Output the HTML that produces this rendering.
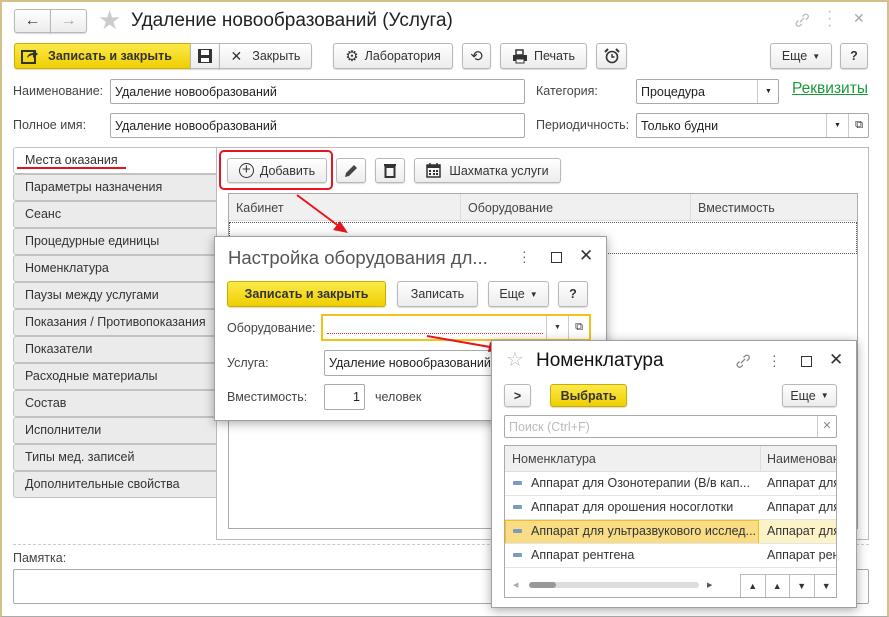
<!DOCTYPE html>
<html><head><meta charset="utf-8"><style>
*{box-sizing:border-box;margin:0;padding:0}
body{width:889px;height:617px;overflow:hidden;background:#fff;font-family:"Liberation Sans","DejaVu Sans",sans-serif;font-size:13px;color:#333;position:relative}
.a{position:absolute}
.frame{left:0;top:0;width:889px;height:617px;border:2px solid #d2c189;border-bottom-color:#aaa;border-bottom-width:1px}
.btn{position:absolute;border:1px solid #b8b8b8;border-radius:3px;background:linear-gradient(#fff,#ececec);box-shadow:0 1px 1px rgba(0,0,0,.15);display:flex;align-items:center;justify-content:center;color:#333;font-size:12.5px;white-space:nowrap}
.y{background:linear-gradient(#fbe94a,#f0cf00);border-color:#c9ad00;color:#333;font-weight:bold}
.inp{position:absolute;border:1px solid #a9a9a9;border-radius:2px;background:#fff;padding-left:4px;display:flex;align-items:center;font-size:12.5px;color:#222;white-space:nowrap;overflow:hidden}
.lbl{position:absolute;color:#444;font-size:12.5px;white-space:nowrap}
.tab{position:absolute;left:13px;width:204px;height:27px;border:1px solid #c2c2c2;border-radius:3px 0 0 3px;background:#ebebeb;padding-left:11px;line-height:25px;font-size:12.5px;color:#333}
.dlg{position:absolute;background:#fff;border:1px solid #a0a0a0;box-shadow:0 2px 10px rgba(0,0,0,.35)}
.row{position:absolute;left:0;right:0;height:24px;border-bottom:1px solid #e4e4e4;line-height:23px;font-size:12.5px;color:#333;white-space:nowrap;overflow:hidden}
.mk{display:inline-block;width:9px;height:4px;background:#7a9cc4;border-radius:1px;margin:0 9px 2px 8px;vertical-align:middle}
</style></head><body>
<div class="a frame"></div>
<svg width="0" height="0" style="position:absolute"><defs><g id="lnk"><path d="M6 10 L10 6 M4.5 8.5 L2.8 10.2 a2.4 2.4 0 0 0 3.4 3.4 L7.9 11.9 M8.5 4.5 L10.2 2.8 a2.4 2.4 0 0 1 3.4 3.4 L11.9 7.9" fill="none" stroke-width="1.3"/></g></defs></svg>
<!-- nav -->
<div class="btn" style="left:14px;top:9px;width:37px;height:24px;border-radius:3px 0 0 3px;font-size:16px">&#8592;</div>
<div class="btn" style="left:50px;top:9px;width:37px;height:24px;border-radius:0 3px 3px 0;font-size:16px;color:#aaa">&#8594;</div>
<div class="a" style="left:98px;top:5px;font-size:26px;color:#ccc">&#9733;</div>
<div class="a" style="left:131px;top:10px;font-size:19px;color:#222">Удаление новообразований (Услуга)</div>
<svg class="a" style="left:794px;top:12px" width="16" height="16"><use href="#lnk" stroke="#bbb"/></svg>
<div class="a" style="left:827px;top:8px;font-size:16px;color:#bbb;line-height:7px">·<br>·<br>·</div>
<div class="a" style="left:853px;top:10px;font-size:14px;color:#aaa">&#10005;</div>
<!-- toolbar -->
<div class="btn y" style="left:14px;top:43px;width:177px;height:26px;border-radius:3px 0 0 3px;justify-content:flex-start;padding-left:6px"><svg width="18" height="16" viewBox="0 0 18 16"><rect x="1" y="3" width="13" height="12" fill="none" stroke="#333" stroke-width="2"/><path d="M6 10 Q7 5 12 5 V2 L17 6 L12 10 V7 Q9 7 6 10Z" fill="#333"/></svg><span style="margin-left:9px">Записать и закрыть</span></div>
<div class="btn" style="left:190px;top:43px;width:30px;height:26px;border-radius:0"><svg width="16" height="16"><rect x="1" y="1" width="14" height="14" fill="#333"/><rect x="4" y="2" width="8" height="5" fill="#fff"/><rect x="4" y="10" width="8" height="4" fill="#fff"/></svg></div>
<div class="btn" style="left:219px;top:43px;width:93px;height:26px;border-radius:0 3px 3px 0"><b style="font-size:14px;margin-right:10px">&#10005;</b>Закрыть</div>
<div class="btn" style="left:333px;top:43px;width:120px;height:26px"><span style="font-size:15px;margin-right:6px">&#9881;</span>Лаборатория</div>
<div class="btn" style="left:462px;top:43px;width:29px;height:26px;font-size:15px">&#10226;</div>
<div class="btn" style="left:500px;top:43px;width:87px;height:26px"><svg width="16" height="15" style="margin-right:6px"><rect x="4" y="1" width="7" height="5" fill="none" stroke="#333" stroke-width="1.5"/><rect x="1" y="6" width="14" height="6" fill="#333"/><rect x="4" y="10" width="8" height="4" fill="#fff" stroke="#333"/></svg>Печать</div>
<div class="btn" style="left:596px;top:43px;width:31px;height:26px"><svg width="16" height="16"><circle cx="8" cy="9" r="5.5" fill="none" stroke="#333" stroke-width="1.6"/><path d="M8 6 V9 H10.5" fill="none" stroke="#333" stroke-width="1.4"/><path d="M1 4 L4 1 M15 4 L12 1" stroke="#333" stroke-width="2"/></svg></div>
<div class="btn" style="left:770px;top:43px;width:62px;height:26px">Еще <span style="font-size:8px;margin-left:5px">&#9660;</span></div>
<div class="btn" style="left:840px;top:43px;width:28px;height:26px;font-weight:bold">?</div>
<!-- fields -->
<div class="lbl" style="left:13px;top:84px">Наименование:</div>
<div class="inp" style="left:110px;top:79px;width:415px;height:25px">Удаление новообразований</div>
<div class="lbl" style="left:13px;top:118px">Полное имя:</div>
<div class="inp" style="left:110px;top:113px;width:415px;height:25px">Удаление новообразований</div>
<div class="lbl" style="left:536px;top:84px">Категория:</div>
<div class="inp" style="left:636px;top:79px;width:143px;height:25px">Процедура<span style="position:absolute;left:120px;top:0;width:22px;height:23px;border-left:1px solid #ccc;font-size:7px;text-align:center;line-height:23px">&#9660;</span></div>
<div class="a" style="left:792px;top:80px;font-size:15.5px;color:#1a9a3a;text-decoration:underline">Реквизиты</div>
<div class="lbl" style="left:536px;top:118px">Периодичность:</div>
<div class="inp" style="left:636px;top:113px;width:233px;height:25px">Только будни<span style="position:absolute;left:189px;top:0;width:22px;height:23px;border-left:1px solid #ccc;font-size:7px;text-align:center;line-height:23px">&#9660;</span><span style="position:absolute;left:211px;top:0;width:21px;height:23px;border-left:1px solid #ccc;font-size:11px;text-align:center;line-height:23px">&#10697;</span></div>
<!-- tabs -->
<div class="tab" style="top:147px;background:#fff;border-right:none">Места оказания</div>
<div class="a" style="left:17px;top:167px;width:109px;height:2px;background:#e0141e"></div>
<div class="tab" style="top:174px">Параметры назначения</div>
<div class="tab" style="top:201px">Сеанс</div>
<div class="tab" style="top:228px">Процедурные единицы</div>
<div class="tab" style="top:255px">Номенклатура</div>
<div class="tab" style="top:282px">Паузы между услугами</div>
<div class="tab" style="top:309px">Показания / Противопоказания</div>
<div class="tab" style="top:336px">Показатели</div>
<div class="tab" style="top:363px">Расходные материалы</div>
<div class="tab" style="top:390px">Состав</div>
<div class="tab" style="top:417px">Исполнители</div>
<div class="tab" style="top:444px">Типы мед. записей</div>
<div class="tab" style="top:471px">Дополнительные свойства</div>
<div class="a" style="left:216px;top:147px;width:653px;height:393px;border:1px solid #bbb"></div>
<div class="btn" style="left:227px;top:158px;width:100px;height:25px"><span style="display:inline-block;width:15px;height:15px;border:1.5px solid #333;border-radius:50%;text-align:center;line-height:11px;font-size:15px;margin-right:6px">+</span>Добавить</div>
<div class="a" style="left:219px;top:150px;width:114px;height:40px;border:2px solid #e8141e;border-radius:5px"></div>
<div class="btn" style="left:336px;top:158px;width:30px;height:25px"><svg width="16" height="16"><path d="M2 14 L3 10 L11 2 L14 5 L6 13 Z" fill="#444"/></svg></div>
<div class="btn" style="left:375px;top:158px;width:30px;height:25px"><svg width="12" height="15"><rect x="0" y="1" width="12" height="2" fill="#333"/><rect x="1.5" y="4" width="9" height="10" fill="none" stroke="#333" stroke-width="2"/></svg></div>
<div class="btn" style="left:414px;top:158px;width:147px;height:25px"><svg width="15" height="15" style="margin-right:8px"><rect x="1" y="2" width="13" height="12" fill="none" stroke="#333" stroke-width="1.5"/><rect x="1" y="2" width="13" height="3" fill="#333"/><path d="M4 0V3M11 0V3" stroke="#333" stroke-width="1.5"/><g fill="#333"><rect x="3" y="7" width="2" height="2"/><rect x="7" y="7" width="2" height="2"/><rect x="10" y="7" width="2" height="2"/><rect x="3" y="10" width="2" height="2"/><rect x="7" y="10" width="2" height="2"/><rect x="10" y="10" width="2" height="2"/></g></svg>Шахматка услуги</div>
<div class="a" style="left:228px;top:193px;width:630px;height:336px;border:1px solid #aaa"></div>
<div class="a" style="left:229px;top:194px;width:628px;height:27px;background:#f0f0f0;border-bottom:1px solid #ddd"></div>
<div class="lbl" style="left:236px;top:201px">Кабинет</div>
<div class="a" style="left:460px;top:194px;width:1px;height:27px;background:#ddd"></div>
<div class="lbl" style="left:468px;top:201px">Оборудование</div>
<div class="a" style="left:690px;top:194px;width:1px;height:27px;background:#ddd"></div>
<div class="lbl" style="left:698px;top:201px">Вместимость</div>
<div class="a" style="left:229px;top:222px;width:628px;height:32px;border:1px dotted #555"></div>
<!-- pamyatka -->
<div class="a" style="left:13px;top:544px;width:856px;border-top:1px dashed #ccc"></div>
<div class="lbl" style="left:13px;top:551px">Памятка:</div>
<div class="inp" style="left:13px;top:569px;width:856px;height:35px"></div>
<svg class="a" style="left:0;top:0" width="889" height="617"><line x1="297" y1="195" x2="340" y2="227" stroke="#e8141e" stroke-width="2"/><polygon points="348,233 333,230 340,221" fill="#e8141e"/></svg>
<!-- dialog 1 -->
<div class="dlg" style="left:214px;top:236px;width:393px;height:185px">
<div class="a" style="left:13px;top:10px;font-size:18.5px;color:#555">Настройка оборудования дл...</div>
<div class="a" style="left:307px;top:12px;font-size:14px;color:#666;line-height:5px">·<br>·<br>·</div>
<div class="a" style="left:336px;top:15px;width:11px;height:11px;border:1.5px solid #333"></div>
<div class="a" style="left:364px;top:9px;font-size:17px;color:#333">&#10005;</div>
<div class="btn y" style="left:12px;top:44px;width:159px;height:26px">Записать и закрыть</div>
<div class="btn" style="left:182px;top:44px;width:81px;height:26px">Записать</div>
<div class="btn" style="left:273px;top:44px;width:61px;height:26px">Еще <span style="font-size:8px;margin-left:5px">&#9660;</span></div>
<div class="btn" style="left:343px;top:44px;width:30px;height:26px;font-weight:bold">?</div>
<div class="lbl" style="left:12px;top:84px">Оборудование:</div>
<div class="a" style="left:106px;top:77px;width:270px;height:27px;border:2px solid #f3c21a;background:#fff"><div class="a" style="left:4px;top:17px;width:216px;border-top:1px dotted #d33"></div><span class="a" style="left:223px;top:0;width:22px;height:23px;border-left:1px solid #ccc;font-size:7px;text-align:center;line-height:23px">&#9660;</span><span class="a" style="left:245px;top:0;width:21px;height:23px;border-left:1px solid #ccc;font-size:11px;text-align:center;line-height:23px">&#10697;</span></div>
<div class="lbl" style="left:12px;top:119px">Услуга:</div>
<div class="inp" style="left:109px;top:113px;width:180px;height:26px">Удаление новообразований</div>
<div class="lbl" style="left:12px;top:153px">Вместимость:</div>
<div class="inp" style="left:109px;top:147px;width:41px;height:26px;justify-content:flex-end;padding-right:4px">1</div>
<div class="lbl" style="left:160px;top:153px">человек</div>
</div>
<svg class="a" style="left:0;top:0" width="889" height="617"><line x1="427" y1="336" x2="490" y2="347" stroke="#e8141e" stroke-width="2"/><polygon points="505,350 488,352 490,342" fill="#e8141e"/></svg>
<!-- dialog 2 -->
<div class="dlg" style="left:491px;top:340px;width:366px;height:268px">
<div class="a" style="left:14px;top:6px;font-size:20px;color:#bbb">&#9734;</div>
<div class="a" style="left:44px;top:9px;font-size:19px;color:#111">Номенклатура</div>
<svg class="a" style="left:243px;top:12px" width="16" height="16"><use href="#lnk" stroke="#888"/></svg>
<div class="a" style="left:280px;top:12px;font-size:14px;color:#666;line-height:5px">·<br>·<br>·</div>
<div class="a" style="left:309px;top:15px;width:11px;height:11px;border:1.5px solid #333"></div>
<div class="a" style="left:337px;top:9px;font-size:17px;color:#333">&#10005;</div>
<div class="btn" style="left:12px;top:43px;width:27px;height:23px;font-weight:bold">&gt;</div>
<div class="btn y" style="left:58px;top:43px;width:77px;height:23px">Выбрать</div>
<div class="btn" style="left:290px;top:43px;width:55px;height:23px">Еще <span style="font-size:8px;margin-left:5px">&#9660;</span></div>
<div class="inp" style="left:12px;top:74px;width:333px;height:23px;color:#bbb;font-size:12.5px">Поиск (Ctrl+F)<span style="position:absolute;right:0;top:0;width:19px;height:21px;border-left:1px solid #ccc;color:#888;text-align:center;line-height:21px;font-size:11px">&#10005;</span></div>
<div class="a" style="left:12px;top:104px;width:333px;height:153px;border:1px solid #aaa;overflow:hidden">
<div class="a" style="left:0;top:0;width:333px;height:26px;background:#f0f0f0;border-bottom:1px solid #ddd"></div>
<div class="lbl" style="left:7px;top:6px">Номенклатура</div>
<div class="a" style="left:255px;top:0;width:1px;height:26px;background:#ddd"></div>
<div class="lbl" style="left:262px;top:6px">Наименован</div>
<div class="row" style="top:26px"><span class="mk"></span>Аппарат для Озонотерапии (В/в кап...<span class="a" style="left:262px">Аппарат для</span></div>
<div class="row" style="top:50px"><span class="mk"></span>Аппарат для орошения носоглотки<span class="a" style="left:262px">Аппарат для</span></div>
<div class="row" style="top:74px;background:#fdf3c8"><div class="a" style="left:0;top:0;width:254px;height:24px;background:#f9dc86;border:1px solid #f2c01a"></div><span class="a" style="left:0;top:0"><span class="mk"></span>Аппарат для ультразвукового исслед...</span><span class="a" style="left:262px">Аппарат для</span></div>
<div class="row" style="top:98px"><span class="mk"></span>Аппарат рентгена<span class="a" style="left:262px">Аппарат рен</span></div>
<div class="a" style="left:8px;top:135px;font-size:7px;color:#aaa">&#9664;</div>
<div class="a" style="left:24px;top:136px;width:170px;height:6px;background:#ddd;border-radius:3px"><div style="width:27px;height:6px;background:#999;border-radius:3px"></div></div>
<div class="a" style="left:202px;top:135px;font-size:7px;color:#555">&#9654;</div>
<div class="a" style="left:235px;top:128px;width:98px;height:24px;border-top:1px solid #bbb;display:flex">
<div style="flex:1;border-left:1px solid #bbb;text-align:center;font-size:9px;line-height:22px">&#9650;</div><div style="flex:1;border-left:1px solid #bbb;text-align:center;font-size:9px;line-height:22px">&#9650;</div><div style="flex:1;border-left:1px solid #bbb;text-align:center;font-size:9px;line-height:22px">&#9660;</div><div style="flex:1;border-left:1px solid #bbb;text-align:center;font-size:9px;line-height:22px">&#9660;</div></div>
</div>
</div>
</body></html>
